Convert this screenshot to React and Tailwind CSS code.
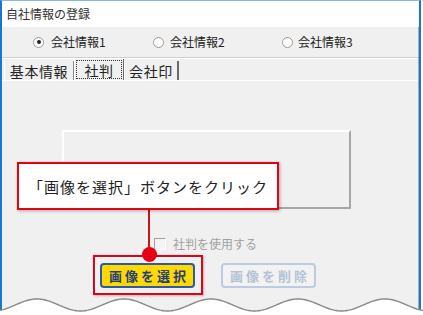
import React from "react";

function Wave() {
  const top = 290;
  let d = "";
  for (let x = 0; x <= 424; x += 1) {
    const y = 305 - 6 * Math.cos((2 * Math.PI * (x - 37)) / 87) - top;
    d += (x === 0 ? "M" : "L") + x + "," + y.toFixed(2) + " ";
  }
  return (
    <svg className="absolute left-0 top-[290px]" width="423" height="25" viewBox="0 0 423 25">
      <path d={d + "L424,25 L0,25 Z"} fill="#ffffff" />
      <path d={d} fill="none" stroke="#8a8a8a" strokeWidth="1.4" />
    </svg>
  );
}

function Radio({ checked }) {
  return (
    <span className="w-[11px] h-[11px] rounded-full border border-[#9a9a9a] bg-white flex items-center justify-center shrink-0">
      {checked && <span className="w-[4px] h-[4px] rounded-full bg-[#222]" />}
    </span>
  );
}

export default function App() {
  const jp = "font-['Noto_Sans_CJK_JP',sans-serif]";
  return (
    <div className={`relative w-[423px] h-[315px] overflow-hidden bg-white ${jp}`}>
      <div className="w-[421px] h-full flex flex-col border-l-2 border-r-2 border-[#1a78c8] border-t-[1px] border-t-[#8ab8e0]">
        {/* title bar */}
        <div className="h-[26px] bg-white flex items-center pl-[4px] text-[12px] text-[#333] leading-none">
          自社情報の登録
        </div>
        {/* content */}
        <div className="flex-1 bg-[#f0f0f0] border-r border-[#a8a8a8] flex flex-col">
          {/* radio row */}
          <div className="h-[30px] flex items-center pl-[31px] text-[12px] text-[#222] leading-none">
            <div className="w-[120px] flex items-center gap-[7px]">
              <Radio checked />
              <span>会社情報1</span>
            </div>
            <div className="w-[129px] flex items-center gap-[6px]">
              <Radio />
              <span>会社情報2</span>
            </div>
            <div className="flex items-center gap-[5px]">
              <Radio />
              <span>会社情報3</span>
            </div>
          </div>
          <div className="h-[1px] bg-[#cfcfcf]" />
          <div className="h-[1px] bg-white" />
          {/* tabs */}
          <div className="h-[21px] flex items-end pl-[2px] text-[14px] tracking-[0.6px] text-[#222] leading-none">
            <div className="h-[19px] w-[70px] flex items-center justify-center border-l border-white border-r border-r-[#8a8a8a]">
              基本情報
            </div>
            <div className="h-[21px] w-[50px] flex items-center justify-center border-l border-white border-r border-r-[#6a6a6a] px-[1px] py-[1px]">
              <div className="w-full h-full border border-dotted border-[#333] flex items-center justify-center">
                社判
              </div>
            </div>
            <div className="h-[19px] w-[55px] flex items-center justify-center border-l border-white border-r-2 border-r-[#6a6a6a]">
              会社印
            </div>
          </div>
          {/* panel */}
          <div className="flex-1 border-t border-white flex flex-col">
            <div className="ml-[60px] mt-[49px] w-[289px] h-[79px] border-t-2 border-l-2 border-white border-r-2 border-b-2 border-r-[#a6a6a6] border-b-[#a6a6a6]" />
            <div className="mt-[29px] ml-[152px] flex items-center gap-[7px] text-[12px] text-[#a0a0a0] leading-none">
              <span className="w-[12px] h-[12px] border border-[#a0a0a0] border-r-white border-b-white bg-[#f4f4f4]" />
              <span>社判を使用する</span>
            </div>
            <div className="mt-[13px] ml-[98px] flex items-center gap-[26px]">
              <div className="w-[95px] h-[25px] rounded-[4px] border-2 border-[#2c5aa8] bg-[#ffd900] flex items-center justify-center text-[13px] font-bold tracking-[3px] pl-[3px] text-[#1f3f7c] leading-none">
                画像を選択
              </div>
              <div className="w-[95px] h-[25px] rounded-[4px] border-2 border-[#bccbe0] bg-[#f2f2f2] flex items-center justify-center text-[13px] font-bold tracking-[3px] pl-[3px] text-[#b4c2d6] leading-none">
                画像を削除
              </div>
            </div>
          </div>
        </div>
      </div>

      {/* annotation: highlight around button */}
      <div className="absolute left-[93px] top-[255px] w-[110px] h-[40px] border-2 border-[#e60012] shadow-[1px_1px_2px_rgba(0,0,0,0.25)]">
        <div className="w-full h-full border border-white" />
      </div>
      {/* connector line and dot */}
      <div className="absolute left-[148px] top-[209px] w-[2px] h-[42px] bg-[#d0121b]" />
      <div className="absolute left-[142px] top-[247px] w-[15px] h-[15px] rounded-full bg-[#e60012]" />
      {/* callout */}
      <div className="absolute left-[17px] top-[162px] w-[262px] h-[48px] bg-white border-2 border-[#e60012] shadow-[1px_1px_3px_rgba(0,0,0,0.3)] flex items-center pl-[9px] text-[15px] tracking-[1px] text-[#222] leading-none">
        「画像を選択」ボタンをクリック
      </div>

      <Wave />
    </div>
  );
}
